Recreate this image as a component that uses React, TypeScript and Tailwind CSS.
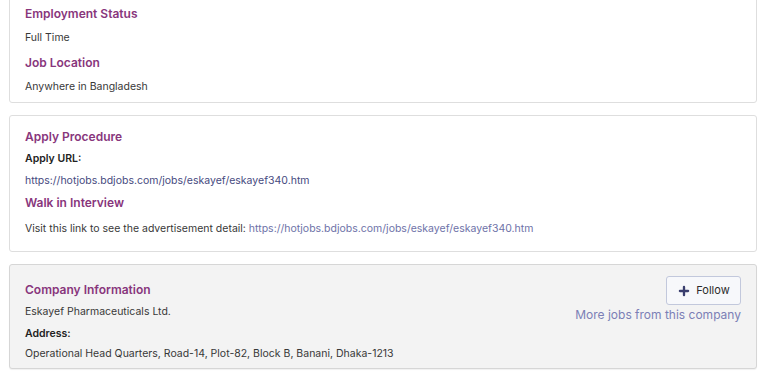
import { Plus } from "lucide-react";

const heading = "text-[12px] leading-[18px] font-semibold text-[#88367c]";
const body = "text-[10.5px] leading-[16px]";

export default function App() {
  return (
    <div className="w-[768px] h-[380px] overflow-hidden bg-white font-['Inter','Noto_Sans',sans-serif]">
      <div className="ml-[9px] w-[748px] flex flex-col">
        {/* employment / location, top edge scrolled off */}
        <section className="-mt-[13px] pt-[17px] pb-[7px] px-[15px] border border-[#dedede] rounded-[3px] bg-white">
          <h3 className={heading}>Employment Status</h3>
          <p className={`${body} mt-[7px] text-[#383838]`}>Full Time</p>
          <h3 className={`${heading} mt-[8px]`}>Job Location</h3>
          <p className={`${body} mt-[7px] text-[#383838]`}>Anywhere in Bangladesh</p>
        </section>

        <section className="mt-[12px] pt-[12px] pb-[14px] px-[15px] border border-[#dedede] rounded-[3px] bg-white">
          <h3 className={heading}>Apply Procedure</h3>
          <p className={`${body} mt-[5px] font-semibold text-[#222222]`}>Apply URL:</p>
          <p className={`${body} mt-[6px] text-[#464a80]`}>https://hotjobs.bdjobs.com/jobs/eskayef/eskayef340.htm</p>
          <h3 className={`${heading} mt-[5px]`}>Walk in Interview</h3>
          <p className={`${body} mt-[9px] text-[#383838]`}>
            Visit this link to see the advertisement detail:{" "}
            <a className="text-[#6e72a8]">https://hotjobs.bdjobs.com/jobs/eskayef/eskayef340.htm</a>
          </p>
        </section>

        <section className="mt-[12px] flex justify-between pl-[15px] pr-[15px] border border-[#d6d6d6] rounded-[3px] bg-[#f3f3f3] shadow-[0_1px_1px_rgba(0,0,0,0.06)]">
          <div className="pt-[16px] pb-[6px]">
            <h3 className={heading}>Company Information</h3>
            <p className={`${body} mt-[5px] text-[#383838]`}>Eskayef Pharmaceuticals Ltd.</p>
            <p className={`${body} mt-[6px] font-semibold text-[#222222]`}>Address:</p>
            <p className={`${body} mt-[4px] text-[#383838]`}>Operational Head Quarters, Road-14, Plot-82, Block B, Banani, Dhaka-1213</p>
          </div>
          <div className="pt-[11px] flex flex-col items-end">
            <button className="w-[75px] h-[29px] flex items-center justify-center gap-[5px] border border-[#c2c8dc] rounded-[3px] bg-[#f7f8fb] text-[11px] text-[#2b2b2b]">
              <Plus size={14} strokeWidth={4} className="text-[#3a3e6e]" />
              Follow
            </button>
            <a className="mt-[2px] text-[12px] leading-[16px] text-[#7b7fb6]">More jobs from this company</a>
          </div>
        </section>
      </div>
    </div>
  );
}
